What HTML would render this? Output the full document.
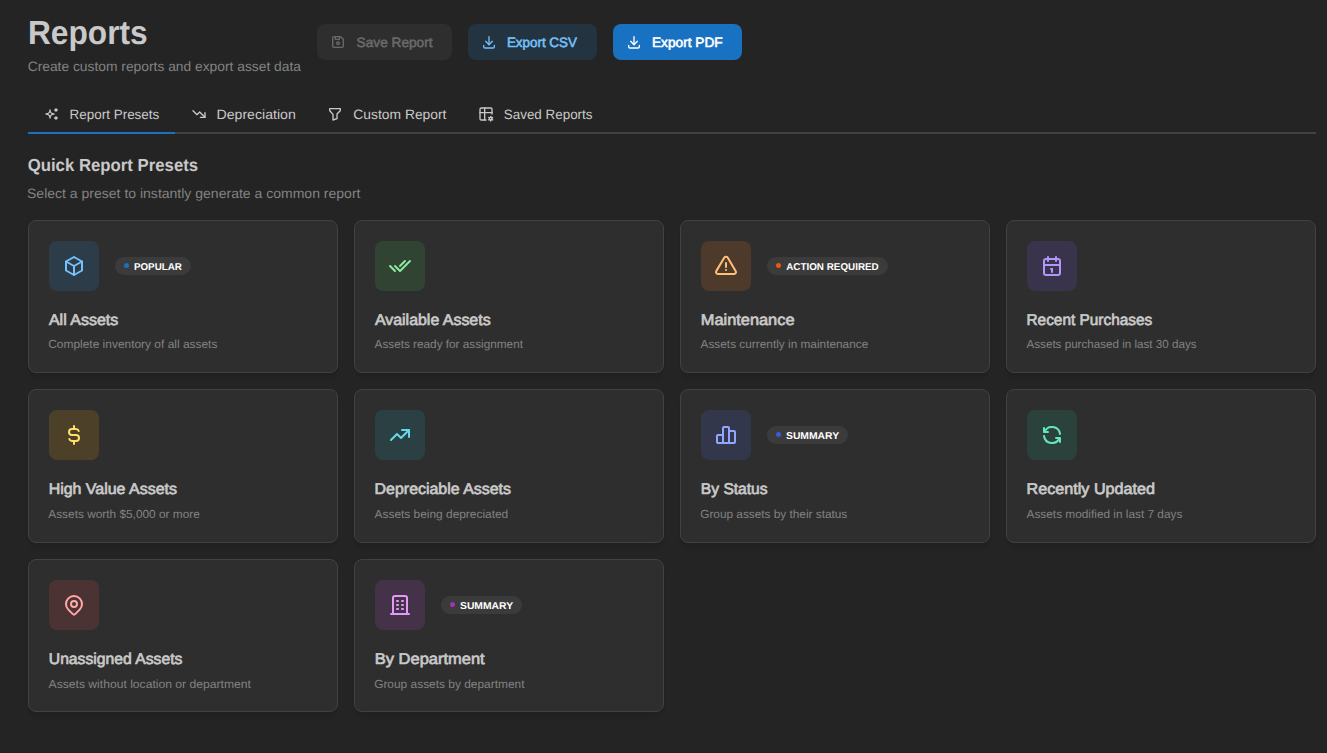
<!DOCTYPE html>
<html lang="en"><head><meta charset="utf-8"><title>Reports</title>
<style>
html,body{margin:0;padding:0}
body{width:1327px;height:753px;background:#242424;font-family:"Liberation Sans", Arial, sans-serif;overflow:hidden;position:relative}
.t{position:absolute;margin:0;padding:0;white-space:pre;line-height:1;transform-origin:0 0;display:inline-block;text-rendering:geometricPrecision}
.g{text-rendering:geometricPrecision}
.i{position:absolute;display:block}
.b{position:absolute;box-sizing:border-box}
.btn{border-radius:8px;height:36px;top:24px}
.tabs{left:28px;top:98px;width:1288px;height:36px;border-bottom:2px solid #424242}
.tab{top:0;height:36px;border-bottom:2px solid transparent}
.tab.on{border-bottom-color:#1971c2}
.card{background:#2e2e2e;border:1px solid #424242;border-radius:8px;width:310px;box-shadow:0 1px 3px rgba(0,0,0,.05),rgba(0,0,0,.05) 0 8px 9px -5px,rgba(0,0,0,.04) 0 7px 7px -5px}
.ib{left:20px;top:20px;width:50px;height:50px;border-radius:8px}
.badge{left:86px;top:36px;height:18px;border-radius:9px;background:#3b3b3b}
.dot{position:absolute;left:8.8px;top:5.8px;width:5.4px;height:5.4px;border-radius:50%}
</style></head><body>
<main>
<header>

<h1 class="t" style="left:27px;top:17px;font-size:33.5px;font-weight:700;color:#c9c9c9;transform:translateX(0.96px) scaleX(0.9457)">Reports</h1>
<p class="t" style="left:27px;top:60px;font-size:13.6px;font-weight:400;color:#828282;transform:translateX(0.65px) scaleX(1.0162)">Create custom reports and export asset data</p>
<div class="b btn" style="left:317px;width:135px;background:#2e2e2e"><svg class="i" style="left:13px;top:10px" width="16" height="16" viewBox="0 0 24 24" fill="none" stroke="#696969" stroke-width="2" stroke-linecap="round" stroke-linejoin="round"><path d="M6 4h10l4 4v10a2 2 0 0 1 -2 2h-12a2 2 0 0 1 -2 -2v-12a2 2 0 0 1 2 -2"/><path d="M12 14m-2 0a2 2 0 1 0 4 0a2 2 0 1 0 -4 0"/><path d="M14 4l0 4l-6 0l0 -4"/></svg><span class="t" style="left:39px;top:12px;font-size:13.6px;font-weight:400;color:#696969;-webkit-text-stroke:0.58px #696969;transform:translateX(0.62px) scaleX(1.0043)">Save Report</span></div>
<div class="b btn" style="left:468px;width:129px;background:rgba(34,139,230,.15)"><svg class="i" style="left:13px;top:10px" width="16" height="16" viewBox="0 0 24 24" fill="none" stroke="#74c0fc" stroke-width="2" stroke-linecap="round" stroke-linejoin="round"><path d="M4 17v2a2 2 0 0 0 2 2h12a2 2 0 0 0 2 -2v-2"/><path d="M7 11l5 5l5 -5"/><path d="M12 4l0 12"/></svg><span class="t" style="left:38px;top:12px;font-size:13.6px;font-weight:400;color:#74c0fc;-webkit-text-stroke:0.58px #74c0fc;transform:translateX(0.93px) scaleX(0.9851)">Export CSV</span></div>
<div class="b btn" style="left:613px;width:129px;background:#1971c2"><svg class="i" style="left:13px;top:10px" width="16" height="16" viewBox="0 0 24 24" fill="none" stroke="#ffffff" stroke-width="2" stroke-linecap="round" stroke-linejoin="round"><path d="M4 17v2a2 2 0 0 0 2 2h12a2 2 0 0 0 2 -2v-2"/><path d="M7 11l5 5l5 -5"/><path d="M12 4l0 12"/></svg><span class="t" style="left:38px;top:12px;font-size:13.6px;font-weight:400;color:#ffffff;-webkit-text-stroke:0.58px #ffffff;transform:translateX(0.94px) scaleX(1.0075)">Export PDF</span></div>
</header>
<nav class="b tabs">
<div class="b tab on" style="left:0px;width:147px"><svg class="i" style="left:16px;top:8px" width="16" height="16" viewBox="0 0 24 24" fill="none" stroke="#c9c9c9" stroke-width="2" stroke-linecap="round" stroke-linejoin="round"><path d="M16 18a2 2 0 0 1 2 2a2 2 0 0 1 2 -2a2 2 0 0 1 -2 -2a2 2 0 0 1 -2 2zm0 -12a2 2 0 0 1 2 2a2 2 0 0 1 2 -2a2 2 0 0 1 -2 -2a2 2 0 0 1 -2 2zm-7 12a6 6 0 0 1 6 -6a6 6 0 0 1 -6 -6a6 6 0 0 1 -6 6a6 6 0 0 1 6 6z"/></svg><span class="t" style="left:41px;top:10px;font-size:13.6px;font-weight:400;color:#c9c9c9;transform:translateX(0.57px) scaleX(0.9897)">Report Presets</span></div>
<div class="b tab" style="left:147px;width:136px"><svg class="i" style="left:16px;top:8px" width="16" height="16" viewBox="0 0 24 24" fill="none" stroke="#c9c9c9" stroke-width="2" stroke-linecap="round" stroke-linejoin="round"><path d="M3 7l6 6l4 -4l8 8"/><path d="M21 10l0 7l-7 0"/></svg><span class="t" style="left:41px;top:10px;font-size:13.6px;font-weight:400;color:#c9c9c9;transform:translateX(0.49px) scaleX(1.0391)">Depreciation</span></div>
<div class="b tab" style="left:283px;width:151px"><svg class="i" style="left:16px;top:8px" width="16" height="16" viewBox="0 0 24 24" fill="none" stroke="#c9c9c9" stroke-width="2" stroke-linecap="round" stroke-linejoin="round"><path d="M4 4h16v2.172a2 2 0 0 1 -.586 1.414l-4.414 4.414v7l-6 2v-8.500l-4.480 -4.928a2 2 0 0 1 -.520 -1.345v-2.227z"/></svg><span class="t" style="left:42px;top:10px;font-size:13.6px;font-weight:400;color:#c9c9c9;transform:translateX(0.37px) scaleX(1.0179)">Custom Report</span></div>
<div class="b tab" style="left:434px;width:147px"><svg class="i" style="left:16px;top:8px" width="16" height="16" viewBox="0 0 24 24" fill="none" stroke="#c9c9c9" stroke-width="2" stroke-linecap="round" stroke-linejoin="round"><path d="M12 21h-7a2 2 0 0 1 -2 -2v-14a2 2 0 0 1 2 -2h14a2 2 0 0 1 2 2v7"/><path d="M3 10h18"/><path d="M10 3v18"/><path d="M19.001 19m-2 0a2 2 0 1 0 4 0a2 2 0 1 0 -4 0"/><path d="M19.001 15.500v1.500"/><path d="M19.001 21v1.500"/><path d="M22.032 17.250l-1.299 .750"/><path d="M17.270 20l-1.300 .750"/><path d="M15.970 17.250l1.300 .750"/><path d="M20.733 20l1.300 .750"/></svg><span class="t" style="left:41px;top:10px;font-size:13.6px;font-weight:400;color:#c9c9c9;transform:translateX(0.78px) scaleX(0.9866)">Saved Reports</span></div>
</nav>
<section>
<h4 class="t" style="left:27px;top:157px;font-size:17.5px;font-weight:700;color:#c9c9c9;transform:translateX(0.69px) scaleX(0.9578)">Quick Report Presets</h4>
<p class="t" style="left:26px;top:187px;font-size:13.6px;font-weight:400;color:#828282;transform:translateX(0.99px) scaleX(1.0311)">Select a preset to instantly generate a common report</p>
<article class="b card" style="left:28px;top:220px;height:153px">
<div class="b ib" style="top:20px;background:rgba(34,139,230,.15)"><svg class="i" style="left:13px;top:13px" width="24" height="24" viewBox="0 0 24 24" fill="none" stroke="#74c0fc" stroke-width="2" stroke-linecap="round" stroke-linejoin="round"><path d="M12 3l8 4.5l0 9l-8 4.5l-8 -4.5l0 -9l8 -4.5"/><path d="M12 12l8 -4.5"/><path d="M12 12l0 9"/><path d="M12 12l-8 -4.5"/></svg></div>
<div class="b badge" style="top:36px;width:76px"><i class="dot" style="background:#1971c2"></i><span class="t" style="left:18px;top:6px;font-size:10px;font-weight:700;color:#ffffff;transform:translateX(0.93px) scaleX(0.9822)">POPULAR</span></div>
<h3 class="t" style="left:19px;top:92px;font-size:15.6px;font-weight:400;color:#c9c9c9;-webkit-text-stroke:0.7px #c9c9c9;transform:translateX(0.95px) scaleX(1.0247)">All Assets</h3>
<p class="t" style="left:19px;top:118px;font-size:11.7px;font-weight:400;color:#828282;transform:translateX(0.21px) scaleX(1.0214)">Complete inventory of all assets</p>
</article>
<article class="b card" style="left:354px;top:220px;height:153px">
<div class="b ib" style="top:20px;background:rgba(64,192,87,.15)"><svg class="i" style="left:13px;top:13px" width="24" height="24" viewBox="0 0 24 24" fill="none" stroke="#8ce99a" stroke-width="2" stroke-linecap="round" stroke-linejoin="round"><path d="M7 12l5 5l10 -10"/><path d="M2 12l5 5m5 -5l5 -5"/></svg></div>
<h3 class="t" style="left:19px;top:92px;font-size:15.6px;font-weight:400;color:#c9c9c9;-webkit-text-stroke:0.7px #c9c9c9;transform:translateX(0.93px) scaleX(1.0211)">Available Assets</h3>
<p class="t" style="left:19px;top:118px;font-size:11.7px;font-weight:400;color:#828282;transform:translateX(0.56px) scaleX(1.0063)">Assets ready for assignment</p>
</article>
<article class="b card" style="left:680px;top:220px;height:153px">
<div class="b ib" style="top:20px;background:rgba(253,126,20,.15)"><svg class="i" style="left:13px;top:13px" width="24" height="24" viewBox="0 0 24 24" fill="none" stroke="#ffc078" stroke-width="2" stroke-linecap="round" stroke-linejoin="round"><path d="M12 9v4"/><path d="M10.363 3.591l-8.106 13.534a1.914 1.914 0 0 0 1.636 2.871h16.214a1.914 1.914 0 0 0 1.636 -2.87l-8.106 -13.536a1.914 1.914 0 0 0 -3.274 0z"/><path d="M12 16h.01"/></svg></div>
<div class="b badge" style="top:36px;width:121px"><i class="dot" style="background:#e8590c"></i><span class="t" style="left:19px;top:6px;font-size:10px;font-weight:700;color:#ffffff;transform:translateX(0.22px) scaleX(0.9852)">ACTION REQUIRED</span></div>
<h3 class="t" style="left:19px;top:92px;font-size:15.6px;font-weight:400;color:#c9c9c9;-webkit-text-stroke:0.7px #c9c9c9;transform:translateX(0.78px) scaleX(1.0494)">Maintenance</h3>
<p class="t" style="left:19px;top:118px;font-size:11.7px;font-weight:400;color:#828282;transform:translateX(0.56px) scaleX(1.0122)">Assets currently in maintenance</p>
</article>
<article class="b card" style="left:1006px;top:220px;height:153px">
<div class="b ib" style="top:20px;background:rgba(121,80,242,.15)"><svg class="i" style="left:13px;top:13px" width="24" height="24" viewBox="0 0 24 24" fill="none" stroke="#b197fc" stroke-width="2" stroke-linecap="round" stroke-linejoin="round"><rect x="4" y="5" width="16" height="16" rx="2"/><path d="M16 3v4"/><path d="M8 3v4"/><path d="M4 11h16"/><path d="M11 15h1"/><path d="M12 15v3"/></svg></div>
<h3 class="t" style="left:19px;top:92px;font-size:15.6px;font-weight:400;color:#c9c9c9;-webkit-text-stroke:0.7px #c9c9c9;transform:translateX(0.48px) scaleX(0.9866)">Recent Purchases</h3>
<p class="t" style="left:19px;top:118px;font-size:11.7px;font-weight:400;color:#828282;transform:translateX(0.52px) scaleX(0.9952)">Assets purchased in last 30 days</p>
</article>
<article class="b card" style="left:28px;top:389px;height:154px">
<div class="b ib" style="top:20px;background:rgba(250,176,5,.15)"><svg class="i" style="left:13px;top:13px" width="24" height="24" viewBox="0 0 24 24" fill="none" stroke="#ffe066" stroke-width="2" stroke-linecap="round" stroke-linejoin="round"><path d="M16.7 8a3 3 0 0 0 -2.7 -2h-4a3 3 0 0 0 0 6h4a3 3 0 0 1 0 6h-4a3 3 0 0 1 -2.7 -2"/><path d="M12 3v3m0 12v3"/></svg></div>
<h3 class="t" style="left:19px;top:92px;font-size:15.6px;font-weight:400;color:#c9c9c9;-webkit-text-stroke:0.7px #c9c9c9;transform:translateX(0.63px) scaleX(1.0230)">High Value Assets</h3>
<p class="t" style="left:19px;top:119px;font-size:11.7px;font-weight:400;color:#828282;transform:translateX(0.28px) scaleX(1.0140)">Assets worth $5,000 or more</p>
</article>
<article class="b card" style="left:354px;top:389px;height:154px">
<div class="b ib" style="top:20px;background:rgba(21,170,191,.15)"><svg class="i" style="left:13px;top:13px" width="24" height="24" viewBox="0 0 24 24" fill="none" stroke="#66d9e8" stroke-width="2" stroke-linecap="round" stroke-linejoin="round"><path d="M3 17l6 -6l4 4l8 -8"/><path d="M14 7l7 0l0 7"/></svg></div>
<h3 class="t" style="left:19px;top:92px;font-size:15.6px;font-weight:400;color:#c9c9c9;-webkit-text-stroke:0.7px #c9c9c9;transform:translateX(0.62px) scaleX(1.0213)">Depreciable Assets</h3>
<p class="t" style="left:19px;top:119px;font-size:11.7px;font-weight:400;color:#828282;transform:translateX(0.56px) scaleX(1.0184)">Assets being depreciated</p>
</article>
<article class="b card" style="left:680px;top:389px;height:154px">
<div class="b ib" style="top:20px;background:rgba(76,110,245,.15)"><svg class="i" style="left:13px;top:13px" width="24" height="24" viewBox="0 0 24 24" fill="none" stroke="#91a7ff" stroke-width="2" stroke-linecap="round" stroke-linejoin="round"><rect x="3" y="12" width="6" height="8" rx="1"/><rect x="9" y="4" width="6" height="16" rx="1"/><rect x="15" y="8" width="6" height="12" rx="1"/><path d="M4 20l14 0"/></svg></div>
<div class="b badge" style="top:36px;width:81px"><i class="dot" style="background:#3b5bdb"></i><span class="t" style="left:18px;top:6px;font-size:10px;font-weight:700;color:#ffffff;transform:translateX(0.98px) scaleX(1.0355)">SUMMARY</span></div>
<h3 class="t" style="left:19px;top:92px;font-size:15.6px;font-weight:400;color:#c9c9c9;-webkit-text-stroke:0.7px #c9c9c9;transform:translateX(0.86px) scaleX(0.9998)">By Status</h3>
<p class="t" style="left:19px;top:119px;font-size:11.7px;font-weight:400;color:#828282;transform:translateX(0.22px) scaleX(1.0103)">Group assets by their status</p>
</article>
<article class="b card" style="left:1006px;top:389px;height:154px">
<div class="b ib" style="top:20px;background:rgba(18,184,134,.15)"><svg class="i" style="left:13px;top:13px" width="24" height="24" viewBox="0 0 24 24" fill="none" stroke="#63e6be" stroke-width="2" stroke-linecap="round" stroke-linejoin="round"><path d="M20 11a8.1 8.1 0 0 0 -15.5 -2m-.5 -4v4h4"/><path d="M4 13a8.1 8.1 0 0 0 15.5 2m.5 4v-4h-4"/></svg></div>
<h3 class="t" style="left:19px;top:92px;font-size:15.6px;font-weight:400;color:#c9c9c9;-webkit-text-stroke:0.7px #c9c9c9;transform:translateX(0.60px) scaleX(1.0355)">Recently Updated</h3>
<p class="t" style="left:19px;top:119px;font-size:11.7px;font-weight:400;color:#828282;transform:translateX(0.56px) scaleX(1.0118)">Assets modified in last 7 days</p>
</article>
<article class="b card" style="left:28px;top:559px;height:153px">
<div class="b ib" style="top:20px;background:rgba(250,82,82,.15)"><svg class="i" style="left:13px;top:13px" width="24" height="24" viewBox="0 0 24 24" fill="none" stroke="#ffa8a8" stroke-width="2" stroke-linecap="round" stroke-linejoin="round"><path d="M9 11a3 3 0 1 0 6 0a3 3 0 0 0 -6 0"/><path d="M17.657 16.657l-4.243 4.243a2 2 0 0 1 -2.827 0l-4.244 -4.243a8 8 0 1 1 11.314 0z"/></svg></div>
<h3 class="t" style="left:19px;top:92px;font-size:15.6px;font-weight:400;color:#c9c9c9;-webkit-text-stroke:0.7px #c9c9c9;transform:translateX(0.79px) scaleX(1.0072)">Unassigned Assets</h3>
<p class="t" style="left:19px;top:119px;font-size:11.7px;font-weight:400;color:#828282;transform:translateX(0.55px) scaleX(1.0383)">Assets without location or department</p>
</article>
<article class="b card" style="left:354px;top:559px;height:153px">
<div class="b ib" style="top:20px;background:rgba(190,75,219,.15)"><svg class="i" style="left:13px;top:13px" width="24" height="24" viewBox="0 0 24 24" fill="none" stroke="#e599f7" stroke-width="2" stroke-linecap="round" stroke-linejoin="round"><path d="M3 21l18 0"/><path d="M9 8l1 0"/><path d="M9 12l1 0"/><path d="M9 16l1 0"/><path d="M14 8l1 0"/><path d="M14 12l1 0"/><path d="M14 16l1 0"/><path d="M5 21v-16a2 2 0 0 1 2 -2h10a2 2 0 0 1 2 2v16"/></svg></div>
<div class="b badge" style="top:36px;width:81px"><i class="dot" style="background:#9c36b5"></i><span class="t" style="left:18px;top:6px;font-size:10px;font-weight:700;color:#ffffff;transform:translateX(0.98px) scaleX(1.0355)">SUMMARY</span></div>
<h3 class="t" style="left:19px;top:92px;font-size:15.6px;font-weight:400;color:#c9c9c9;-webkit-text-stroke:0.7px #c9c9c9;transform:translateX(0.78px) scaleX(1.0566)">By Department</h3>
<p class="t" style="left:19px;top:119px;font-size:11.7px;font-weight:400;color:#828282;transform:translateX(0.14px) scaleX(1.0192)">Group assets by department</p>
</article>
</section>
</main>
</body></html>
